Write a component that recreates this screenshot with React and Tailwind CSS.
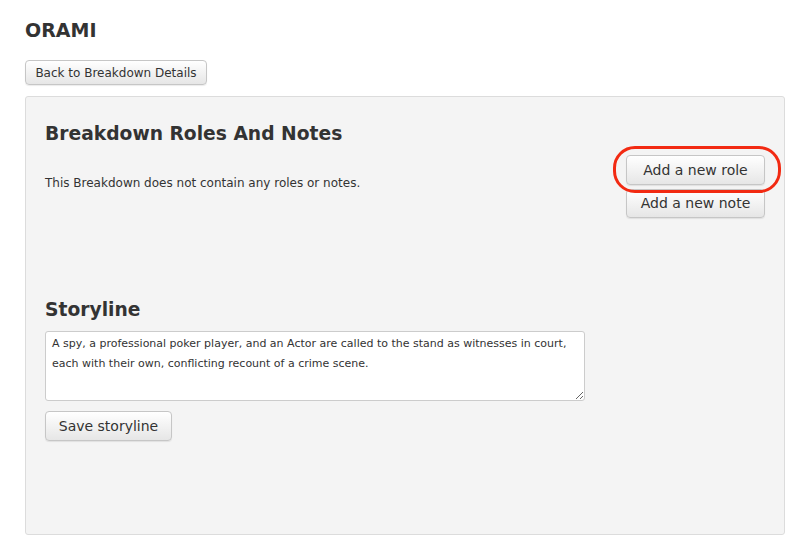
function Btn({ children, className = "" }) {
  return (
    <button
      className={`rounded-[4px] border border-[#c6c6c6] bg-gradient-to-b from-white to-[#e6e6e6] text-[#333] shadow-[0_1px_1px_rgba(0,0,0,0.08)] ${className}`}
    >
      {children}
    </button>
  );
}

function App() {
  return (
    <div className="min-h-[558px] bg-white px-[25px] pt-[18px] text-[#333] [font-family:'DejaVu_Sans',Verdana,sans-serif]">
      <h1 className="text-[19px] font-bold leading-[25px]">ORAMI</h1>
      <Btn className="mt-[17px] h-[25px] w-[182px] text-[12px]">
        Back to Breakdown Details
      </Btn>

      <div className="mt-[11px] h-[439px] w-[760px] rounded-[3px] border border-[#dcdcdc] bg-[#f4f4f4] px-[19px] pt-[22px]">
        <div className="flex justify-between">
          <div>
            <h2 className="text-[18.7px] font-bold leading-[30px]">
              Breakdown Roles And Notes
            </h2>
            <p className="mt-[26px] text-[12px] leading-[16px]">
              This Breakdown does not contain any roles or notes.
            </p>
          </div>
          <div className="mt-[36px] flex flex-col gap-[4px]">
            <div className="relative">
              <Btn className="h-[30px] w-[139px] text-[14px]">Add a new role</Btn>
              <div className="pointer-events-none absolute left-[-13px] top-[-9px] h-[47px] w-[168px] rounded-[22px] border-[3px] border-[#f22a12]" />
            </div>
            <Btn className="h-[29px] w-[139px] text-[14px]">Add a new note</Btn>
          </div>
        </div>

        <h2 className="mt-[77px] text-[18.7px] font-bold leading-[30px]">Storyline</h2>
        <textarea
          className="mt-[6px] block h-[70px] w-[540px] resize-y rounded-[3px] border border-[#cccccc] bg-white px-[6px] pb-[5px] pt-[2px] text-[11px] leading-[20px] text-[#333] outline-none"
          defaultValue="A spy, a professional poker player, and an Actor are called to the stand as witnesses in court, each with their own, conflicting recount of a crime scene."
        />
        <Btn className="mt-[10px] h-[30px] w-[127px] text-[14px]">Save storyline</Btn>
      </div>
    </div>
  );
}

export default App;
